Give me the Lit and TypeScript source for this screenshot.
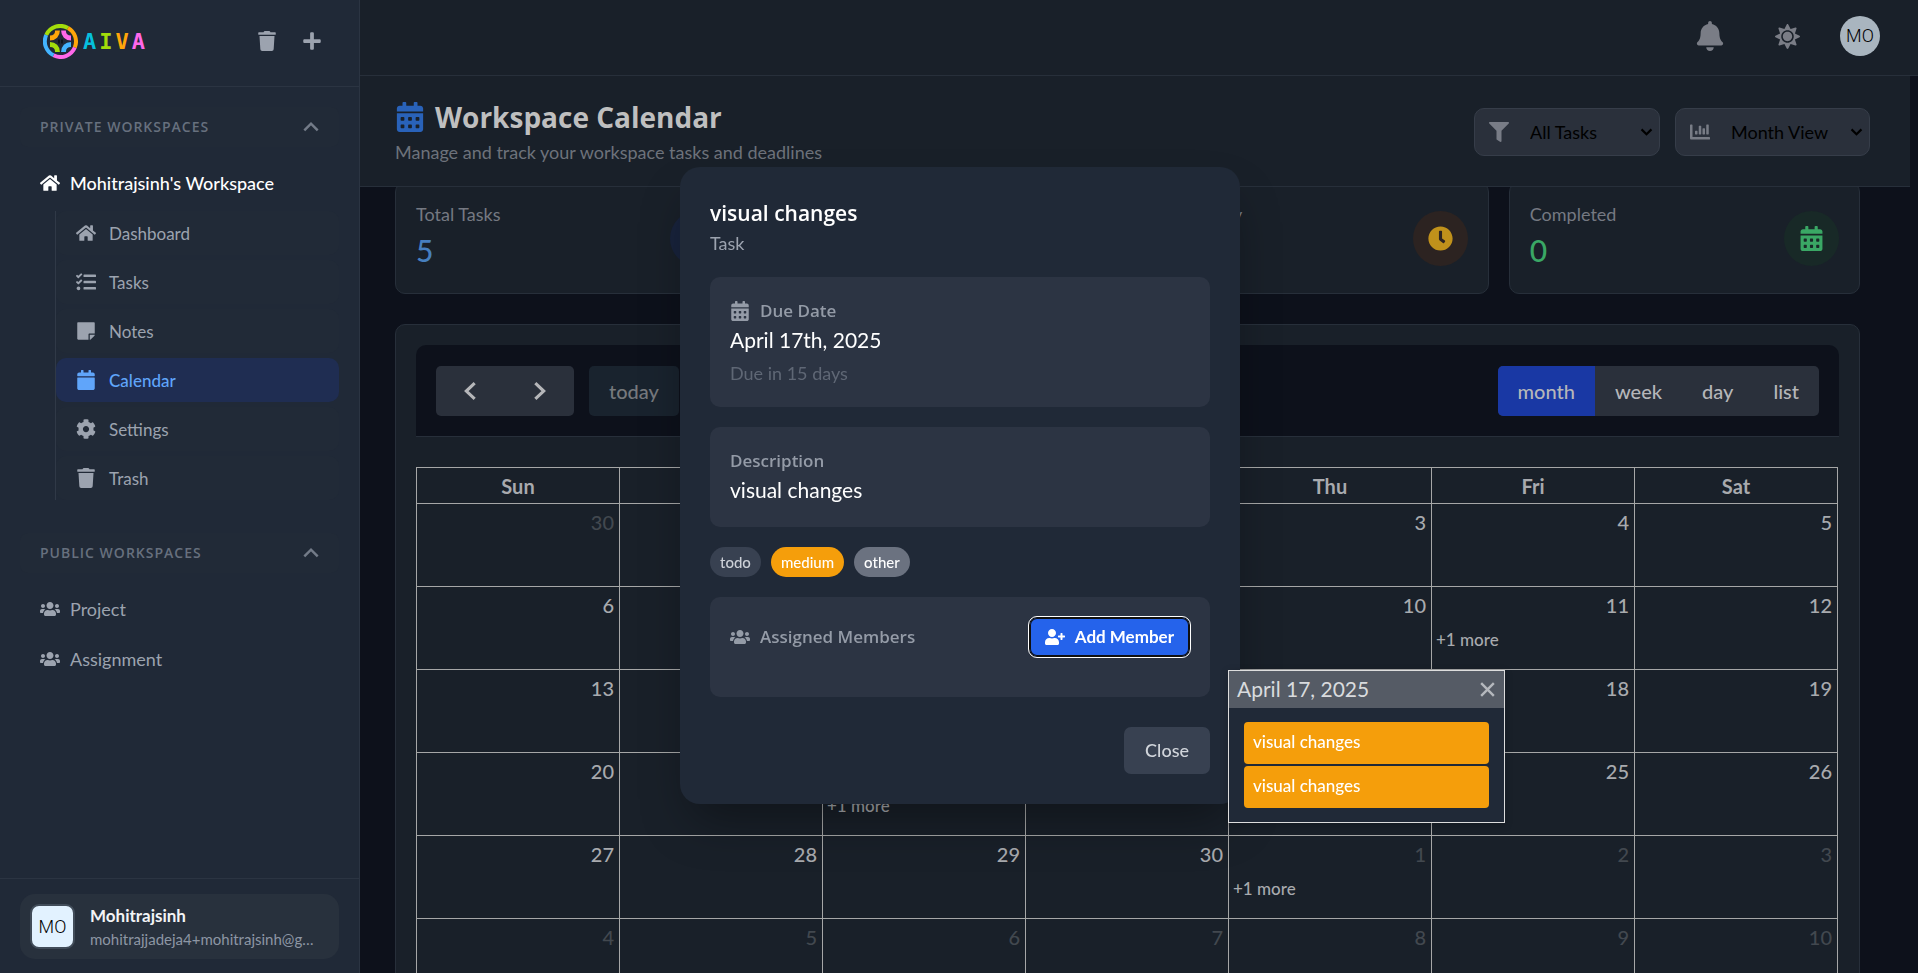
import { LitElement, html, svg, css } from "lit";
import { customElement, property } from "lit/decorators.js";
import { classMap } from "lit/directives/class-map.js";

const ICONS: Record<string, [number, string]> = {
  home: [576, "M280.37 148.26L96 300.11V464a16 16 0 0 0 16 16l112.06-.29a16 16 0 0 0 15.92-16V368a16 16 0 0 1 16-16h64a16 16 0 0 1 16 16v95.64a16 16 0 0 0 16 16.05L464 480a16 16 0 0 0 16-16V300L295.67 148.26a12.19 12.19 0 0 0-15.3 0zM571.6 251.47L488 182.56V44.05a12 12 0 0 0-12-12h-56a12 12 0 0 0-12 12v72.61L318.47 43a48 48 0 0 0-61 0L4.34 251.47a12 12 0 0 0-1.6 16.9l25.5 31A12 12 0 0 0 45.15 301l235.22-193.74a12.19 12.19 0 0 1 15.3 0L530.9 301a12 12 0 0 0 16.9-1.6l25.5-31a12 12 0 0 0-1.7-16.93z"],
  tasks: [512, "M139.61 35.5a12 12 0 0 0-17 0L58.93 98.81l-22.7-22.12a12 12 0 0 0-17 0L3.53 92.41a12 12 0 0 0 0 17l47.59 47.4a12.78 12.78 0 0 0 17.61 0l15.59-15.62L156.52 69a12.09 12.09 0 0 0 .09-17zm0 159.19a12 12 0 0 0-17 0l-63.68 63.72-22.7-22.1a12 12 0 0 0-17 0L3.53 252a12 12 0 0 0 0 17L51 316.5a12.77 12.77 0 0 0 17.6 0l15.7-15.69 72.2-72.22a12 12 0 0 0 .09-16.9zM64 368c-26.49 0-48.59 21.5-48.59 48S37.53 464 64 464a48 48 0 0 0 0-96zm432 16H208a16 16 0 0 0-16 16v32a16 16 0 0 0 16 16h288a16 16 0 0 0 16-16v-32a16 16 0 0 0-16-16zm0-320H208a16 16 0 0 0-16 16v32a16 16 0 0 0 16 16h288a16 16 0 0 0 16-16V80a16 16 0 0 0-16-16zm0 160H208a16 16 0 0 0-16 16v32a16 16 0 0 0 16 16h288a16 16 0 0 0 16-16v-32a16 16 0 0 0-16-16z"],
  note: [448, "M312 320h136V56c0-13.3-10.7-24-24-24H24C10.7 32 0 42.7 0 56v400c0 13.3 10.7 24 24 24h264V344c0-13.2 10.8-24 24-24zm129 55l-98 98c-4.5 4.5-10.6 7-17 7h-6V352h128v6.1c0 6.3-2.5 12.4-7 16.9z"],
  calendar: [448, "M12 192h424c6.6 0 12 5.4 12 12v260c0 26.5-21.5 48-48 48H48c-26.5 0-48-21.5-48-48V204c0-6.6 5.4-12 12-12zm436-44v-36c0-26.5-21.5-48-48-48h-48V12c0-6.6-5.4-12-12-12h-40c-6.6 0-12 5.4-12 12v52H160V12c0-6.6-5.4-12-12-12h-40c-6.6 0-12 5.4-12 12v52H48C21.5 64 0 85.5 0 112v36c0 6.6 5.4 12 12 12h424c6.6 0 12-5.4 12-12z"],
  cog: [512, "M487.4 315.7l-42.6-24.6c4.3-23.2 4.3-47 0-70.2l42.6-24.6c4.9-2.8 7.1-8.6 5.5-14-11.1-35.6-30-67.8-54.7-94.6-3.8-4.1-10-5.1-14.8-2.3L380.8 110c-17.9-15.4-38.5-27.3-60.8-35.1V25.8c0-5.6-3.9-10.5-9.4-11.7-36.7-8.2-74.3-7.8-109.2 0-5.5 1.2-9.4 6.1-9.4 11.7V75c-22.2 7.9-42.8 19.8-60.8 35.1L88.7 85.5c-4.9-2.8-11-1.9-14.8 2.3-24.7 26.7-43.6 58.9-54.7 94.6-1.7 5.4.6 11.2 5.5 14L67.3 221c-4.3 23.2-4.3 47 0 70.2l-42.6 24.6c-4.9 2.8-7.1 8.6-5.5 14 11.1 35.6 30 67.8 54.7 94.6 3.8 4.1 10 5.1 14.8 2.3l42.6-24.6c17.9 15.4 38.5 27.3 60.8 35.1v49.2c0 5.6 3.9 10.5 9.4 11.7 36.7 8.2 74.3 7.8 109.2 0 5.5-1.2 9.4-6.1 9.4-11.7v-49.2c22.2-7.9 42.8-19.8 60.8-35.1l42.6 24.6c4.9 2.8 11 1.9 14.8-2.3 24.7-26.7 43.6-58.9 54.7-94.6 1.5-5.5-.7-11.3-5.6-14.1zM256 336c-44.1 0-80-35.9-80-80s35.9-80 80-80 80 35.9 80 80-35.9 80-80 80z"],
  trash: [448, "M432 32H312l-9.4-18.7A24 24 0 0 0 281.1 0H166.8a23.72 23.72 0 0 0-21.4 13.3L136 32H16A16 16 0 0 0 0 48v32a16 16 0 0 0 16 16h416a16 16 0 0 0 16-16V48a16 16 0 0 0-16-16zM53.2 467a48 48 0 0 0 47.9 45h245.8a48 48 0 0 0 47.9-45L416 128H32z"],
  plus: [448, "M416 208H272V64c0-17.67-14.33-32-32-32h-32c-17.67 0-32 14.33-32 32v144H32c-17.67 0-32 14.33-32 32v32c0 17.67 14.33 32 32 32h144v144c0 17.67 14.33 32 32 32h32c17.67 0 32-14.33 32-32V304h144c17.67 0 32-14.33 32-32v-32c0-17.67-14.33-32-32-32z"],
  users: [640, "M96 224c35.3 0 64-28.7 64-64s-28.7-64-64-64-64 28.7-64 64 28.7 64 64 64zm448 0c35.3 0 64-28.7 64-64s-28.7-64-64-64-64 28.7-64 64 28.7 64 64 64zm32 32h-64c-17.6 0-33.5 7.1-45.1 18.6 40.3 22.1 68.9 62 75.1 109.4h66c17.7 0 32-14.3 32-32v-32c0-35.3-28.7-64-64-64zm-256 0c61.9 0 112-50.1 112-112S381.9 32 320 32 208 82.1 208 144s50.1 112 112 112zm76.8 32h-8.3c-20.8 10-43.9 16-68.5 16s-47.6-6-68.5-16h-8.3C179.6 288 128 339.6 128 403.2V432c0 26.5 21.5 48 48 48h288c26.5 0 48-21.5 48-48v-28.8c0-63.6-51.6-115.2-115.2-115.2zm-223.7-13.4C161.5 263.1 145.6 256 128 256H64c-35.3 0-64 28.7-64 64v32c0 17.7 14.3 32 32 32h65.9c6.3-47.4 34.9-87.3 75.2-109.4z"],
  userPlus: [640, "M624 208h-64v-64c0-8.8-7.2-16-16-16h-32c-8.8 0-16 7.2-16 16v64h-64c-8.8 0-16 7.2-16 16v32c0 8.8 7.2 16 16 16h64v64c0 8.8 7.2 16 16 16h32c8.8 0 16-7.2 16-16v-64h64c8.8 0 16-7.2 16-16v-32c0-8.8-7.2-16-16-16zm-400 48c70.7 0 128-57.3 128-128S294.7 0 224 0 96 57.3 96 128s57.3 128 128 128zm89.6 32h-16.7c-22.2 10.2-46.9 16-72.9 16s-50.6-5.8-72.9-16h-16.7C60.2 288 0 348.2 0 422.4V464c0 26.5 21.5 48 48 48h352c26.5 0 48-21.5 48-48v-41.6c0-74.2-60.2-134.4-134.4-134.4z"],
  calendarAlt: [448, "M0 464c0 26.5 21.5 48 48 48h352c26.5 0 48-21.5 48-48V192H0v272zm320-196c0-6.6 5.4-12 12-12h40c6.6 0 12 5.4 12 12v40c0 6.6-5.4 12-12 12h-40c-6.6 0-12-5.4-12-12v-40zm0 128c0-6.6 5.4-12 12-12h40c6.6 0 12 5.4 12 12v40c0 6.6-5.4 12-12 12h-40c-6.6 0-12-5.4-12-12v-40zM192 268c0-6.6 5.4-12 12-12h40c6.6 0 12 5.4 12 12v40c0 6.6-5.4 12-12 12h-40c-6.6 0-12-5.4-12-12v-40zm0 128c0-6.6 5.4-12 12-12h40c6.6 0 12 5.4 12 12v40c0 6.6-5.4 12-12 12h-40c-6.6 0-12-5.4-12-12v-40zM64 268c0-6.6 5.4-12 12-12h40c6.6 0 12 5.4 12 12v40c0 6.6-5.4 12-12 12H76c-6.6 0-12-5.4-12-12v-40zm0 128c0-6.6 5.4-12 12-12h40c6.6 0 12 5.4 12 12v40c0 6.6-5.4 12-12 12H76c-6.6 0-12-5.4-12-12v-40zM400 64h-48V16c0-8.8-7.2-16-16-16h-32c-8.8 0-16 7.2-16 16v48H160V16c0-8.8-7.2-16-16-16h-32c-8.8 0-16 7.2-16 16v48H48C21.5 64 0 85.5 0 112v48h448v-48c0-26.5-21.5-48-48-48z"],
  bell: [448, "M224 512c35.32 0 63.97-28.65 63.97-64H160.03c0 35.35 28.65 64 63.97 64zm215.39-149.71c-19.32-20.76-55.47-51.99-55.47-154.29 0-77.7-54.48-139.9-127.94-155.16V32c0-17.67-14.32-32-31.98-32s-31.98 14.33-31.98 32v20.84C118.56 68.1 64.08 130.3 64.08 208c0 102.3-36.15 133.53-55.47 154.29-6 6.45-8.66 14.16-8.61 21.71.11 16.4 12.98 32 32.1 32h383.8c19.12 0 32-15.6 32.1-32 .05-7.55-2.61-15.27-8.61-21.71z"],
  sun: [512, "M256 160c-52.9 0-96 43.1-96 96s43.1 96 96 96 96-43.1 96-96-43.1-96-96-96zm246.4 80.5l-94.7-47.3 33.5-100.4c4.5-13.6-8.4-26.5-21.9-21.9l-100.4 33.5-47.4-94.8c-6.4-12.8-24.6-12.8-31 0l-47.3 94.7L92.7 70.8c-13.6-4.5-26.5 8.4-21.9 21.9l33.5 100.4-94.7 47.4c-12.8 6.4-12.8 24.6 0 31l94.7 47.3-33.5 100.5c-4.5 13.6 8.4 26.5 21.9 21.9l100.4-33.5 47.3 94.7c6.4 12.8 24.6 12.8 31 0l47.3-94.7 100.4 33.5c13.6 4.5 26.5-8.4 21.9-21.9l-33.5-100.4 94.7-47.3c13-6.5 13-24.7.2-31.1zm-155.9 106c-49.9 49.9-131.1 49.9-181 0-49.9-49.9-49.9-131.1 0-181 49.9-49.9 131.1-49.9 181 0 49.9 49.9 49.9 131.1 0 181z"],
  filter: [512, "M487.976 0H24.028C2.71 0-8.047 25.866 7.058 40.971L192 225.941V432c0 7.831 3.821 15.17 10.237 19.662l80 55.98C298.02 518.69 320 507.493 320 487.98V225.941l184.947-184.97C520.021 25.896 509.338 0 487.976 0z"],
  chart: [512, "M332.8 320h38.4c6.4 0 12.8-6.4 12.8-12.8V172.8c0-6.4-6.4-12.8-12.8-12.8h-38.4c-6.4 0-12.8 6.4-12.8 12.8v134.4c0 6.4 6.4 12.8 12.8 12.8zm96 0h38.4c6.4 0 12.8-6.4 12.8-12.8V76.8c0-6.4-6.4-12.8-12.8-12.8h-38.4c-6.4 0-12.8 6.4-12.8 12.8v230.4c0 6.4 6.4 12.8 12.8 12.8zm-288 0h38.4c6.4 0 12.8-6.4 12.8-12.8v-70.4c0-6.4-6.4-12.8-12.8-12.8h-38.4c-6.4 0-12.8 6.4-12.8 12.8v70.4c0 6.4 6.4 12.8 12.8 12.8zm96 0h38.4c6.4 0 12.8-6.4 12.8-12.8V108.8c0-6.4-6.4-12.8-12.8-12.8h-38.4c-6.4 0-12.8 6.4-12.8 12.8v198.4c0 6.4 6.4 12.8 12.8 12.8zM496 384H64V80c0-8.84-7.16-16-16-16H16C7.16 64 0 71.16 0 80v336c0 17.67 14.33 32 32 32h464c8.84 0 16-7.16 16-16v-32c0-8.84-7.16-16-16-16z"],
  clock: [512, "M256,8C119,8,8,119,8,256S119,504,256,504,504,393,504,256,393,8,256,8Zm92.49,313h0l-20,25a16,16,0,0,1-22.49,2.5h0l-67-49.72a40,40,0,0,1-15-31.23V112a16,16,0,0,1,16-16h32a16,16,0,0,1,16,16V256l58,42.5A16,16,0,0,1,348.49,321Z"],
};

const LINES: Record<string, string> = {
  up: "M4 16l8-8 8 8",
  down: "M5 9l7 7 7-7",
  left: "M16 5l-8 7.500 8 7.500",
  right: "M8 5l8 7.500-8 7.500",
  cross: "M4 4l16 16M20 4L4 20",
};

@customElement("ui-icon")
class UiIcon extends LitElement {
  @property() name = "home";
  static styles = css`
    :host { display: inline-flex; width: 20px; height: 20px; flex: none; }
    svg { width: 100%; height: 100%; display: block; }
  `;
  render() {
    const line = LINES[this.name];
    if (line) {
      return html`<svg viewBox="0 0 24 24" aria-hidden="true" fill="none" stroke="currentColor" stroke-width="3">${svg`<path d=${line} />`}</svg>`;
    }
    const [w, d] = ICONS[this.name];
    return html`<svg viewBox="0 0 ${w} 512" aria-hidden="true" fill="currentColor">${svg`<path d=${d} />`}</svg>`;
  }
}

const NAV = [
  { label: "Dashboard", icon: "home" },
  { label: "Tasks", icon: "tasks" },
  { label: "Notes", icon: "note" },
  { label: "Calendar", icon: "calendar" },
  { label: "Settings", icon: "cog" },
  { label: "Trash", icon: "trash" },
];

const STATS = [
  { label: "Total Tasks", value: 5, icon: "tasks", tone: "blue" },
  { label: "In Progress", value: 0, icon: "chart", tone: "blue" },
  { label: "Due Today", value: 0, icon: "clock", tone: "amber" },
  { label: "Completed", value: 0, icon: "calendarAlt", tone: "green" },
];

const DAYS = ["Sun", "Mon", "Tue", "Wed", "Thu", "Fri", "Sat"];
const FIRST = new Date(2025, 2, 30);
const MORE = new Set(["3/11", "3/22", "4/1"]);

@customElement("app-root")
class AppRoot extends LitElement {
  static styles = css`
    :host {
      --head: "Open Sans", "Noto Sans", sans-serif;
      --body: Lato, "Open Sans", sans-serif;
      display: flex;
      height: 100vh;
      overflow: hidden;
      background: #0d111b;
      font-family: var(--body);
      font-size: 18px;
      color: #9ca3af;
    }
    * { box-sizing: border-box; }
    h1, h2, h3, p, ul { margin: 0; padding: 0; }
    ul { list-style: none; }
    button { font: inherit; color: inherit; background: none; border: 0; padding: 0; cursor: pointer; }
    a { color: inherit; text-decoration: none; }

    .sidebar { width: 360px; flex: none; display: flex; flex-direction: column; background: #202937; border-right: 1px solid #2b3442; }
    .brand { height: 87px; display: flex; align-items: center; padding: 0 37px 4px 43px; border-bottom: 1px solid #2b3442; }
    .logo { display: flex; align-items: center; gap: 5px; flex: 1; }
    .logo svg { width: 35px; height: 35px; }
    .word { font: bold 22px/35px "DejaVu Sans Mono", monospace; display: flex; gap: 3px; }
    .w1 { color: #06bfdc; } .w2 { color: #a3dd0b; } .w3 { color: #ffa60a; } .w4 { color: #ff68ea; }
    .tools { display: flex; gap: 25px; }
    .tools ui-icon { display: flex; }
    .nav { flex: 1; padding: 20px 20px 0; }
    .section { width: 100%; display: flex; align-items: center; justify-content: space-between; height: 40px; padding: 0 18px 0 20px; border-radius: 8px; background: #212a37; font: 600 14px/20px var(--head); letter-spacing: 1px; color: #67707e; }
    .section ui-icon { color: #737b88; }
    .space { display: flex; align-items: center; gap: 10px; height: 50px; padding: 0 20px; }
    .current { height: 44px; margin: 14px 0 6px; color: #fff; font-weight: 500; }
    .sub { margin: 0 0 33px 35px; border-left: 1px solid #303947; display: grid; gap: 5px; font-size: 17px; }
    .item { display: flex; align-items: center; gap: 13px; height: 44px; padding: 0 20px; border-radius: 10px; background: #212a37; }
    .active { background: #1f2d52; color: #60a5fa; font-weight: 500; }
    .public { margin-top: 11px; }
    .account { border-top: 1px solid #2b3442; padding: 15px 20px 14px; }
    .profile { display: flex; align-items: center; gap: 15px; height: 65px; padding: 0 18px 0 10px; border-radius: 15px; background: #28313d; }
    .tile { width: 45px; height: 45px; flex: none; border: 2px solid #414c59; border-radius: 9px; background: #e2f2ff; color: #000; display: grid; place-items: center; font: 300 18px/24px Roboto, sans-serif; }
    .who { min-width: 0; }
    .name { color: #f3f4f6; font-weight: 700; line-height: 24px; font-size: 17px; }
    .mail { font-size: 15px; line-height: 22px; color: #8d96a4; overflow: hidden; text-overflow: ellipsis; white-space: nowrap; }

    .main { flex: 1; min-width: 0; display: flex; flex-direction: column; }
    .top { height: 76px; flex: none; display: flex; justify-content: flex-end; align-items: center; padding: 0 38px 3px 0; background: #192029; border-bottom: 1px solid #272f3a; color: #7a7d86; }
    .bell { width: 30px; height: 30px; margin-right: 50px; }
    .sun { width: 25px; height: 25px; margin-right: 40px; }
    .avatar { width: 40px; height: 40px; border-radius: 50%; background: #a9b5bf; color: #000; display: grid; place-items: center; font: 300 18px/24px Roboto, sans-serif; }
    .view { flex: 1; min-height: 0; overflow: hidden; padding-right: 8px; }
    .pagehead { position: relative; z-index: 1; display: flex; justify-content: space-between; align-items: center; height: 111px; padding: 1px 40px 0 35px; background: #192029; border-bottom: 1px solid #272f3a; }
    .title { display: flex; align-items: center; gap: 10px; font: 700 28px/40px var(--head); color: #bfbfbf; }
    .title ui-icon { width: 30px; height: 30px; color: #2962b9; }
    .lead { line-height: 30px; color: #6d727b; }
    .filters { display: flex; gap: 15px; }
    .picker { display: flex; align-items: center; width: 186px; height: 48px; padding: 0 4px 0 14px; border: 1px solid #363d49; border-radius: 10px; background: #2a303b; color: #787c86; gap: 16px; }
    .wide { width: 195px; }
    .drop { flex: 1; display: grid; align-items: center; }
    .drop select, .drop ui-icon { grid-area: 1 / 1; }
    .drop select { appearance: none; border: 0; background: none; font: inherit; color: #000; width: 100%; height: 40px; padding: 0 24px 0 5px; }
    .drop ui-icon { justify-self: end; color: #000; width: 17px; height: 17px; pointer-events: none; }

    .content { padding: 0 50px 0 35px; }
    .stats { display: grid; grid-template-columns: repeat(4, 1fr); gap: 20px; margin: -5px 0 30px; }
    .stat { display: flex; justify-content: space-between; align-items: center; height: 112px; padding: 0 20px; background: #192029; border: 1px solid #272f3a; border-radius: 10px; }
    .stat dl { margin: 0; padding-bottom: 4px; }
    .stat dt { line-height: 28px; color: #757982; }
    .stat dd { margin: 0; font-size: 30px; line-height: 45px; font-weight: 500; }
    .badge { width: 55px; height: 55px; border-radius: 50%; display: grid; place-items: center; }
    .badge ui-icon { width: 25px; height: 25px; }
    .blue { color: #477fbe; } .green { color: #3aa765; } .amber { color: #c0911b; }
    .badge.blue { background: #18233c; } .badge.green { background: #182927; } .badge.amber { background: #2c2321; }

    .panel { border: 1px solid #272f3a; border-radius: 10px; background: #192029; padding: 20px; }
    .bar { display: flex; align-items: center; justify-content: space-between; height: 92px; padding: 0 20px; margin-bottom: 30px; background: #0d111b; border-bottom: 1px solid #272f3a; border-radius: 10px 10px 0 0; font-size: 20px; font-weight: 500; color: #b5b6b9; }
    .left { display: flex; gap: 15px; }
    .group { display: flex; border-radius: 5px; overflow: hidden; background: #2a303b; }
    .group button { height: 50px; padding: 0 20px; }
    .group .arrow { width: 69px; padding: 0; display: grid; place-items: center; }
    .arrow ui-icon { width: 25px; height: 25px; }
    .today { background: #19232e; height: 50px; padding: 0 20px; border-radius: 5px; color: #76797d; }
    .month { font: 700 28px/40px var(--head); }
    .group .on { background: #1938a4; }

    table { width: calc(100% - 1px); border-collapse: collapse; table-layout: fixed; color: #a8aaae; font-size: 20px; }
    th, td { border: 1px solid #a6a7a7; padding: 0; }
    th { height: 36px; line-height: 34px; font-weight: 700; }
    td { height: 83px; vertical-align: top; position: relative; }
    .num { display: block; text-align: right; padding: 4px 5px 0; line-height: 28px; font-weight: 500; }
    .out { color: #42484f; }
    .more { display: block; margin: 9px 0 0 4px; font-size: 17px; line-height: 24px; font-weight: 500; }

    .popover { position: absolute; z-index: 20; left: -1px; top: 0; width: 277px; border: 1px solid #ddd; background: #202937; box-shadow: 0 2px 8px rgba(0, 0, 0, 0.2); color: #d9dbde; }
    .pophead { display: flex; justify-content: space-between; align-items: center; height: 37px; padding: 0 7px 3px 8px; background: #555b65; font-size: 21px; }
    .pophead ui-icon { width: 19px; height: 19px; margin-top: 3px; color: #b5b8bd; display: flex; }
    .events { padding: 14px 15px; display: grid; gap: 2px; }
    .event { display: block; padding: 0 9px 2px; line-height: 40px; font-size: 17px; font-weight: 500; border-radius: 4px; background: #f59e0b; color: #fff; }

    .layer { position: fixed; inset: 0; z-index: 10; display: grid; place-items: center; padding: 0 0 3px 2px; }
    .modal { width: 560px; padding: 30px; border-radius: 20px; background: #202937; box-shadow: 0 25px 50px -12px rgba(0, 0, 0, 0.4); }
    .modal h2 { font: 600 21px/32px var(--head); color: #fff; }
    .kind { line-height: 29px; margin-bottom: 19px; }
    .box { background: #2c3443; border-radius: 10px; padding: 20px; margin-bottom: 20px; }
    .box h3 { display: flex; align-items: center; gap: 10px; font: 600 17px/28px var(--head); color: #949ba7; }
    .strong { margin-top: 1px; font-size: 21px; line-height: 28px; color: #fff; }
    .due { margin-top: 6px; padding-bottom: 1px; line-height: 26px; color: #5f6775; }
    .desc { padding-bottom: 23px; }
    .tags { display: flex; gap: 10px; margin-bottom: 20px; }
    .tag { padding: 0 10px; border-radius: 15px; font-size: 15px; line-height: 30px; font-weight: 500; background: #384151; color: #cdd1d8; }
    .medium { background: #f59e0b; color: #fff; }
    .other { background: #6b7280; color: #fff; }
    .members { display: flex; justify-content: space-between; align-items: center; padding-bottom: 40px; }
    .add { display: flex; align-items: center; gap: 10px; height: 40px; padding: 0 15px; border: 1px solid #101010; border-radius: 8px; background: #2563eb; color: #fff; font-size: 17px; font-weight: 700; outline: 1px solid #fff; box-shadow: inset 0 0 0 1px #101010; }
    .actions { display: flex; justify-content: flex-end; margin-top: 30px; }
    .close { height: 47px; padding: 0 21px; border-radius: 7px; background: #384151; color: #d1d5db; font-weight: 500; }
  `;

  private sectionHead(label: string) {
    return html`<button class="section">${label}<ui-icon name="up"></ui-icon></button>`;
  }

  private cell(date: Date) {
    const key = `${date.getMonth()}/${date.getDate()}`;
    return html`<td>
      <span class=${classMap({ num: true, out: date.getMonth() !== 3 })}>${date.getDate()}</span>
      ${MORE.has(key) ? html`<a class="more" href="#">+1 more</a>` : ""}
      ${key === "3/17" ? html`<div class="popover">
        <div class="pophead"><span>April 17, 2025</span><button aria-label="Close list"><ui-icon name="cross"></ui-icon></button></div>
        <div class="events"><a class="event" href="#">visual changes</a><a class="event" href="#">visual changes</a></div>
      </div>` : ""}
    </td>`;
  }

  render() {
    return html`
      <aside class="sidebar">
        <div class="brand">
          <div class="logo">
            <svg viewBox="0 0 35 35" fill="none" stroke-width="4" aria-hidden="true">
              <path d="M3.2 11A15.5 15.5 0 0 1 25 4" stroke="#a3dd0b" />
              <path d="M25 4A15.5 15.5 0 0 1 31.8 23.5" stroke="#ffa60a" />
              <path d="M31.8 23.5A15.5 15.5 0 0 1 10.5 31.3" stroke="#ff68ea" />
              <path d="M10.5 31.3A15.5 15.5 0 0 1 3.2 11" stroke="#43b4ff" />
              <path d="M14.5 6.500C14.500 11 11.500 14 7 14" stroke="#ffa60a" stroke-width="4.800" />
              <path d="M20.500 6.500C20.500 11 23.500 14 28 14" stroke="#ff68ea" stroke-width="4.800" />
              <path d="M7 20.500C11.500 20.500 14.500 23.500 14.500 28" stroke="#a3dd0b" stroke-width="4.800" />
              <path d="M28 20.500C23.500 20.500 20.500 23.500 20.500 28" stroke="#43b4ff" stroke-width="4.800" />
              <path d="M16 15.500v4M19 15.500v4" stroke="#0b0f16" stroke-width="1.600" />
            </svg>
            <span class="word"><span class="w1">A</span><span class="w2">I</span><span class="w3">V</span><span class="w4">A</span></span>
          </div>
          <div class="tools">
            <button aria-label="Trash"><ui-icon name="trash"></ui-icon></button>
            <button aria-label="Add workspace"><ui-icon name="plus"></ui-icon></button>
          </div>
        </div>
        <nav class="nav">
          ${this.sectionHead("PRIVATE WORKSPACES")}
          <a class="space current" href="#"><ui-icon name="home"></ui-icon>Mohitrajsinh's Workspace</a>
          <div class="sub">
            ${NAV.map((n) => html`<a href="#" class=${classMap({ item: true, active: n.label === "Calendar" })}><ui-icon name=${n.icon}></ui-icon>${n.label}</a>`)}
          </div>
          ${this.sectionHead("PUBLIC WORKSPACES")}
          <div class="public">
            <a class="space" href="#"><ui-icon name="users"></ui-icon>Project</a>
            <a class="space" href="#"><ui-icon name="users"></ui-icon>Assignment</a>
          </div>
        </nav>
        <div class="account">
          <div class="profile">
            <span class="tile">MO</span>
            <div class="who">
              <p class="name">Mohitrajsinh</p>
              <p class="mail">mohitrajjadeja4+mohitrajsinh@gmail.com</p>
            </div>
          </div>
        </div>
      </aside>

      <main class="main">
        <header class="top">
          <button class="bell" aria-label="Notifications"><ui-icon class="bell" name="bell"></ui-icon></button>
          <button class="sun" aria-label="Theme"><ui-icon class="sun" name="sun"></ui-icon></button>
          <span class="avatar">MO</span>
        </header>
        <div class="view">
          <div class="pagehead">
            <div>
              <h1 class="title"><ui-icon name="calendarAlt"></ui-icon>Workspace Calendar</h1>
              <p class="lead">Manage and track your workspace tasks and deadlines</p>
            </div>
            <div class="filters">
              <div class="picker"><ui-icon name="filter"></ui-icon>
                <div class="drop"><select aria-label="Task filter"><option>All Tasks</option></select><ui-icon name="down"></ui-icon></div>
              </div>
              <div class="picker wide"><ui-icon name="chart"></ui-icon>
                <div class="drop"><select aria-label="Calendar view"><option>Month View</option></select><ui-icon name="down"></ui-icon></div>
              </div>
            </div>
          </div>
          <div class="content">
            <section class="stats">
              ${STATS.map((s) => html`<div class="stat">
                <dl><dt>${s.label}</dt><dd class=${s.tone}>${s.value}</dd></dl>
                <span class="badge ${s.tone}"><ui-icon name=${s.icon}></ui-icon></span>
              </div>`)}
            </section>
            <section class="panel">
              <div class="bar">
                <div class="left">
                  <div class="group">
                    <button class="arrow" aria-label="Previous month"><ui-icon name="left"></ui-icon></button>
                    <button class="arrow" aria-label="Next month"><ui-icon name="right"></ui-icon></button>
                  </div>
                  <button class="today">today</button>
                </div>
                <h2 class="month">April 2025</h2>
                <div class="group">
                  <button class="on">month</button><button>week</button><button>day</button><button>list</button>
                </div>
              </div>
              <table>
                <thead><tr>${DAYS.map((d) => html`<th scope="col">${d}</th>`)}</tr></thead>
                <tbody>
                  ${[0, 1, 2, 3, 4, 5].map((w) => html`<tr>${DAYS.map((_, d) => this.cell(new Date(FIRST.getFullYear(), FIRST.getMonth(), FIRST.getDate() + w * 7 + d)))}</tr>`)}
                </tbody>
              </table>
            </section>
          </div>
        </div>
      </main>

      <div class="layer">
        <section class="modal" role="dialog" aria-label="visual changes">
          <h2>visual changes</h2>
          <p class="kind">Task</p>
          <div class="box">
            <h3><ui-icon name="calendarAlt"></ui-icon>Due Date</h3>
            <p class="strong">April 17th, 2025</p>
            <p class="due">Due in 15 days</p>
          </div>
          <div class="box desc">
            <h3>Description</h3>
            <p class="strong">visual changes</p>
          </div>
          <div class="tags"><span class="tag">todo</span><span class="tag medium">medium</span><span class="tag other">other</span></div>
          <div class="box members">
            <h3><ui-icon name="users"></ui-icon>Assigned Members</h3>
            <button class="add"><ui-icon name="userPlus"></ui-icon>Add Member</button>
          </div>
          <div class="actions"><button class="close">Close</button></div>
        </section>
      </div>
    `;
  }
}
